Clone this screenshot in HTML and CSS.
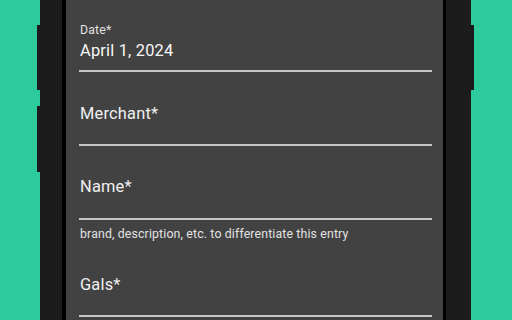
FILE: index.html
```html
<!DOCTYPE html>
<html>
<head>
<meta charset="utf-8">
<link rel="stylesheet" href="styles.css">
</head>
<body>
<div class="phone">
  <span class="btn btn-left btn-1"></span>
  <span class="btn btn-left btn-2"></span>
  <span class="btn btn-right btn-3"></span>
  <div class="bezel">
    <div class="screen">
      <div class="field field-filled">
        <div class="small-label">Date*</div>
        <div class="value">April 1, 2024</div>
      </div>
      <div class="field">
        <div class="label">Merchant*</div>
      </div>
      <div class="field">
        <div class="label">Name*</div>
      </div>
      <div class="helper">brand, description, etc. to differentiate this entry</div>
      <div class="field">
        <div class="label">Gals*</div>
      </div>
    </div>
  </div>
</div>
</body>
</html>
```
FILE: styles.css
```css
html, body {
  margin: 0;
  padding: 0;
  height: 320px;
  overflow: hidden;
}
body {
  background: #2dcb9b;
  font-family: Roboto, "Noto Sans", Arial, sans-serif;
  display: flex;
  padding-left: 40px;
}
.phone {
  position: relative;
  width: 431px;
  height: 320px;
  box-sizing: border-box;
  background: #1c1c1c;
  padding: 0 25px 0 22px;
  display: flex;
}
.btn {
  position: absolute;
  width: 3px;
  background: #1d181c;
}
.btn-left { left: -3px; }
.btn-right { right: -3px; }
.btn-1 { top: 25px; height: 65px; }
.btn-2 { top: 106px; height: 66px; }
.btn-3 { top: 25px; height: 65px; }
.bezel {
  flex: 1;
  background: #000;
  padding: 0 3.3px 0 4px;
  display: flex;
}
.screen {
  flex: 1;
  background: #424242;
  padding: 0 10.4px 0 13px;
  display: flex;
  flex-direction: column;
}
.field {
  padding: 29.3px 0 18.4px 1px;
  border-bottom: 2px solid #c6c6c6;
}
.field-filled {
  padding: 22px 0 7.7px 1px;
}
.small-label {
  font-size: 12.3px;
  line-height: 16px;
  letter-spacing: 0.15px;
  color: #e0e0e0;
}
.value {
  margin-top: 0.6px;
  font-size: 16.4px;
  line-height: 24px;
  letter-spacing: 0.2px;
  color: #f8f8f8;
}
.label {
  font-size: 16.4px;
  line-height: 24px;
  letter-spacing: 0.2px;
  color: #f0f0f0;
}
.helper {
  margin: 6.2px 0 1.4px 1px;
  font-size: 12.3px;
  line-height: 16px;
  letter-spacing: 0.15px;
  color: #e2e2e2;
}
```
